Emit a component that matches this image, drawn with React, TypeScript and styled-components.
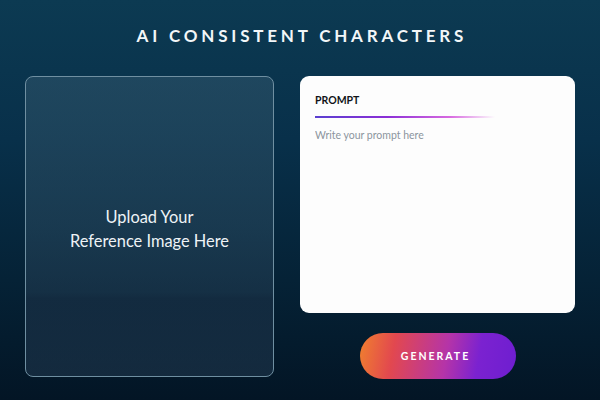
import React from "react";
import styled, { createGlobalStyle } from "styled-components";

const Global = createGlobalStyle`
  html, body { margin: 0; padding: 0; }
  body {
    width: 600px;
    height: 400px;
    overflow: hidden;
    background: linear-gradient(180deg, #0c3a52 0%, #08304a 35%, #052236 70%, #031525 100%);
    font-family: Lato, "Open Sans", sans-serif;
  }
`;

const Page = styled.div`
  width: 600px;
  height: 400px;
  box-sizing: border-box;
  padding: 26px 25px 0;
  display: flex;
  flex-direction: column;
`;

const Title = styled.h1`
  margin: 0 0 30px;
  height: 20px;
  line-height: 20px;
  text-align: center;
  color: #f2f6f8;
  font-size: 17px;
  font-weight: 700;
  letter-spacing: 3.8px;
  padding-left: 3.8px;
`;

const Columns = styled.div`
  display: grid;
  grid-template-columns: 249px 275px;
  column-gap: 26px;
  align-items: start;
`;

const UploadBox = styled.div`
  height: 301px;
  box-sizing: border-box;
  border: 1.5px solid #6f8fa1;
  border-radius: 8px;
  background: linear-gradient(180deg, rgba(48, 86, 108, 0.55) 0%, rgba(40, 72, 94, 0.55) 50%, rgba(34, 60, 82, 0.55) 72%, rgba(28, 50, 72, 0.6) 74%, rgba(30, 54, 76, 0.6) 100%);
  display: flex;
  align-items: center;
  justify-content: center;
  padding-top: 4px;
`;

const UploadText = styled.div`
  color: #eef3f6;
  font-size: 16.4px;
  line-height: 24px;
  text-align: center;
`;

const RightCol = styled.div`
  display: flex;
  flex-direction: column;
  align-items: center;
  gap: 20px;
`;

const PromptCard = styled.div`
  width: 100%;
  height: 237px;
  box-sizing: border-box;
  background: #fdfdfd;
  border-radius: 9px;
  padding: 17px 15px;
  display: flex;
  flex-direction: column;
`;

const Label = styled.div`
  font-size: 10.5px;
  font-weight: 700;
  color: #111418;
  line-height: 14px;
`;

const Underline = styled.div`
  margin-top: 9px;
  width: 180px;
  height: 2px;
  background: linear-gradient(90deg, #5a3fd0 0%, #8b2fd6 40%, #d86ae0 75%, rgba(250, 200, 245, 0) 100%);
`;

const PromptInput = styled.textarea`
  margin-top: 11px;
  flex: 1;
  border: none;
  outline: none;
  resize: none;
  padding: 0;
  background: transparent;
  font-family: Lato, "Open Sans", sans-serif;
  font-size: 10.5px;
  color: #333;
  &::placeholder { color: #8c959e; }
`;

const GenerateButton = styled.button`
  width: 156px;
  height: 46px;
  border: none;
  border-radius: 23px;
  background: linear-gradient(100deg, #f0802e 0%, #e2484f 22%, #b534a8 55%, #7b22d0 75%, #6e1ed0 100%);
  color: #fff;
  font-family: Lato, "Open Sans", sans-serif;
  font-size: 10.5px;
  font-weight: 700;
  letter-spacing: 2px;
  padding-left: 2px;
  cursor: pointer;
`;

export default function App() {
  return (
    <>
      <Global />
      <Page>
        <Title>AI CONSISTENT CHARACTERS</Title>
        <Columns>
          <UploadBox>
            <UploadText>
              Upload Your
              <br />
              Reference Image Here
            </UploadText>
          </UploadBox>
          <RightCol>
            <PromptCard>
              <Label>PROMPT</Label>
              <Underline />
              <PromptInput placeholder="Write your prompt here" />
            </PromptCard>
            <GenerateButton>GENERATE</GenerateButton>
          </RightCol>
        </Columns>
      </Page>
    </>
  );
}
